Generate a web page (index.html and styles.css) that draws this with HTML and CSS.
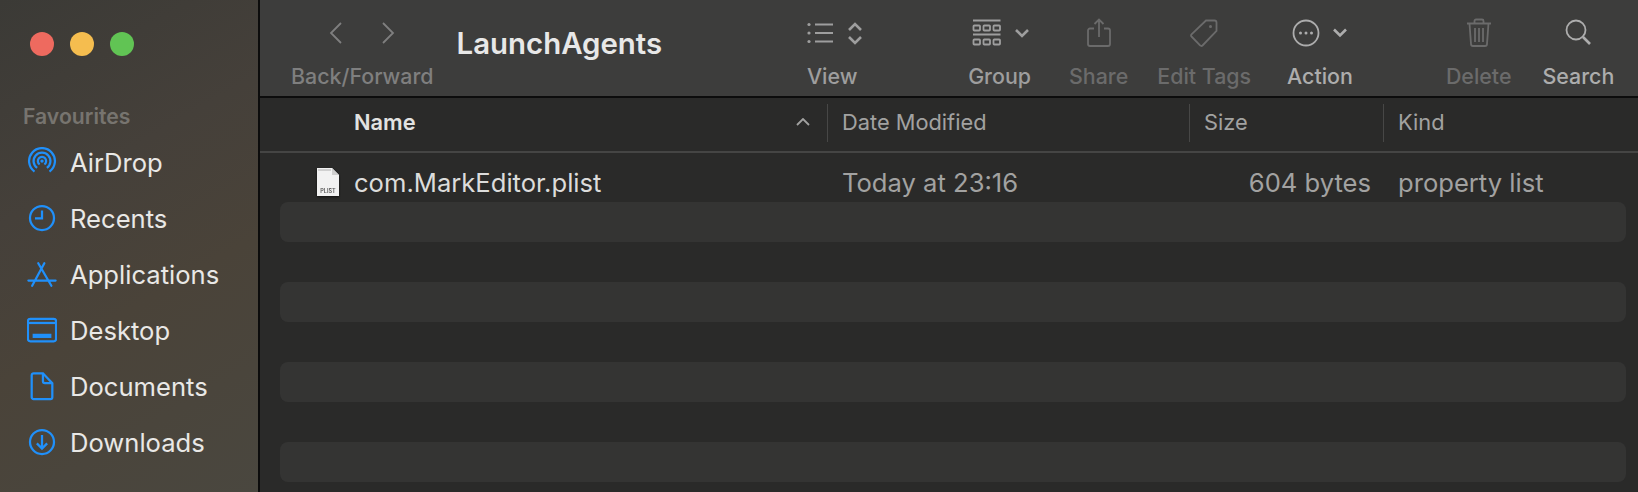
FILE: index.html
```html
<!DOCTYPE html>
<html lang="en">
<head>
  <meta charset="UTF-8" />
  <title>LaunchAgents</title>
  <link rel="stylesheet" href="styles.css">
</head>
<body>
  <div class="window">

    <!-- Sidebar -->
    <aside class="sidebar">
      <div class="lights">
        <span class="light red"></span>
        <span class="light yellow"></span>
        <span class="light green"></span>
      </div>
      <div class="side-title">Favourites</div>
      <ul class="side-list">
        <li class="side-item">
          <svg class="side-icon" viewBox="0 0 32 32"><path d="M8 26.200A13.800 13.800 0 1 1 24 26.200"/><path d="M10.800 22.300A9 9 0 1 1 21.200 22.300"/><path d="M13.500 18.600A4.400 4.400 0 1 1 18.500 18.600"/><circle class="solid" cx="16" cy="15" r="1.800"/></svg>
          AirDrop
        </li>
        <li class="side-item">
          <svg class="side-icon" viewBox="0 0 32 32"><circle cx="16" cy="16" r="12.800"/><path d="M16 8V16.500H8.500"/></svg>
          Recents
        </li>
        <li class="side-item">
          <svg class="side-icon" viewBox="0 0 32 32"><path d="M1.500 23H30.500M12 4.500L26 28.500M18.500 4.500L5.500 28.500" stroke-linecap="round"/></svg>
          Applications
        </li>
        <li class="side-item">
          <svg class="side-icon" viewBox="0 0 32 32"><rect x="1" y="4" width="30" height="24" rx="2.500"/><path d="M1 8.500H31"/><rect class="solid" x="6" y="20" width="20" height="4.500"/></svg>
          Desktop
        </li>
        <li class="side-item">
          <svg class="side-icon" viewBox="0 0 32 32"><path d="M7 2.500H17L27 13V28a2 2 0 0 1-2 2H7a2 2 0 0 1-2-2V4.500a2 2 0 0 1 2-2Z"/><path d="M17 2.500V11a2 2 0 0 0 2 2H27"/></svg>
          Documents
        </li>
        <li class="side-item">
          <svg class="side-icon" viewBox="0 0 32 32"><circle cx="16" cy="16" r="12.800"/><path d="M16 8.500V22.500M10.500 17.500L16 23L21.500 17.500"/></svg>
          Downloads
        </li>
      </ul>
    </aside>

    <div class="main">

      <!-- Toolbar -->
      <header class="toolbar">
        <div class="tool tool-back dim">
          <div class="tool-icon nav-icons">
            <svg width="16" height="24" viewBox="0 0 16 24"><path d="M13 2L3 12L13 22"/></svg>
            <svg width="16" height="24" viewBox="0 0 16 24"><path d="M3 2L13 12L3 22"/></svg>
          </div>
          <span class="tool-label">Back/Forward</span>
        </div>

        <h1 class="title">LaunchAgents</h1>

        <div class="tool tool-view">
          <div class="tool-icon">
            <svg width="56" height="28" viewBox="0 0 56 28"><path d="M9 5.500H27M9 14H27M9 22.500H27"/><circle class="solid" cx="3" cy="5.500" r="1.600"/><circle class="solid" cx="3" cy="14" r="1.600"/><circle class="solid" cx="3" cy="22.500" r="1.600"/><path class="thick" d="M43 11L49 5L55 11M43 18L49 24L55 18"/></svg>
          </div>
          <span class="tool-label">View</span>
        </div>

        <div class="tool tool-group">
          <div class="tool-icon">
            <svg width="58" height="28" viewBox="0 0 58 28"><path d="M1 1.500H28.500M1 15.500H28.500"/><rect x="1.500" y="6.500" width="6.500" height="5" rx=".8"/><rect x="11.500" y="6.500" width="6.500" height="5" rx=".8"/><rect x="21.500" y="6.500" width="6.500" height="5" rx=".8"/><rect x="1.500" y="20.500" width="6.500" height="5" rx=".8"/><rect x="11.500" y="20.500" width="6.500" height="5" rx=".8"/><rect x="21.500" y="20.500" width="6.500" height="5" rx=".8"/><path class="thick" d="M44 11L50 17L56 11"/></svg>
          </div>
          <span class="tool-label">Group</span>
        </div>

        <div class="tool tool-share dim">
          <div class="tool-icon">
            <svg width="24" height="30" viewBox="0 0 24 30"><path d="M7 10.500H3a2 2 0 0 0-2 2V26a2 2 0 0 0 2 2H21a2 2 0 0 0 2-2V12.500a2 2 0 0 0-2-2H17M12 19V1.500M7.500 6L12 1.500L16.500 6"/></svg>
          </div>
          <span class="tool-label">Share</span>
        </div>

        <div class="tool tool-tags dim">
          <div class="tool-icon">
            <svg width="30" height="30" viewBox="0 0 30 30"><path d="M17 2.500H25.500a2 2 0 0 1 2 2V13L13.500 27.500a1.500 1.500 0 0 1-2.200 0L2.500 18.500a1.500 1.500 0 0 1 0-2.200Z"/><circle class="solid" cx="21.500" cy="8.500" r="1.500"/></svg>
          </div>
          <span class="tool-label">Edit Tags</span>
        </div>

        <div class="tool tool-action">
          <div class="tool-icon">
            <svg width="56" height="28" viewBox="0 0 56 28"><circle cx="14" cy="14" r="12.500"/><circle class="solid" cx="8.500" cy="14" r="1.500"/><circle class="solid" cx="14" cy="14" r="1.500"/><circle class="solid" cx="19.500" cy="14" r="1.500"/><path class="thick" d="M42 10.500L48 16.500L54 10.500"/></svg>
          </div>
          <span class="tool-label">Action</span>
        </div>

        <div class="tool tool-delete dim">
          <div class="tool-icon">
            <svg width="26" height="30" viewBox="0 0 26 30"><path d="M1 5.500H25M8.500 5V3a1.500 1.500 0 0 1 1.500-1.500H16A1.500 1.500 0 0 1 17.500 3V5M3.500 5.500L5 26a2 2 0 0 0 2 2H19a2 2 0 0 0 2-2L22.500 5.500M9 10V24M13 10V24M17 10V24"/></svg>
          </div>
          <span class="tool-label">Delete</span>
        </div>

        <div class="tool tool-search">
          <div class="tool-icon">
            <svg width="26" height="28" viewBox="0 0 26 28"><circle cx="11" cy="11" r="9.500"/><path class="thick" d="M18 18L25 25"/></svg>
          </div>
          <span class="tool-label">Search</span>
        </div>
      </header>

      <!-- Column header -->
      <div class="columns">
        <div class="col col-name">
          <span>Name</span>
          <svg width="14" height="8" viewBox="0 0 14 8"><path d="M1 7L7 1L13 7"/></svg>
        </div>
        <div class="col">Date Modified</div>
        <div class="col">Size</div>
        <div class="col">Kind</div>
      </div>

      <!-- File rows -->
      <div class="list">
        <div class="row">
          <div class="cell cell-name">
            <svg class="file-icon" width="24" height="30" viewBox="0 0 24 30">
              <path d="M1 1H16L23 8V29H1Z" fill="#f2f2f2"/>
              <path d="M16 1L23 8H16Z" fill="#cfcfcf"/>
              <path d="M2 3H15" stroke="#c4c4c4" stroke-width="1.500"/>
              <text x="12" y="26" text-anchor="middle" class="file-tag">PLIST</text>
            </svg>
            com.MarkEditor.plist
          </div>
          <div class="cell">Today at 23:16</div>
          <div class="cell cell-size">604 bytes</div>
          <div class="cell">property list</div>
        </div>
        <div class="row"></div>
        <div class="row"></div>
        <div class="row"></div>
        <div class="row"></div>
        <div class="row"></div>
        <div class="row"></div>
        <div class="row"></div>
      </div>
    </div>
  </div>
</body>
</html>
```

FILE: styles.css
```css
:root {
  --blue: #2090fa;
  --tool: #9e9e9e;
  --tool-dim: #6b6b6b;
  --list-bg: #2a2a29;
  --stripe: #343433;
  --muted: #a2a2a1;
}

* {
  box-sizing: border-box;
}

body {
  margin: 0;
  width: 1638px;
  height: 492px;
  overflow: hidden;
  font-family: Inter, 'Noto Sans', sans-serif;
  background-color: var(--list-bg);
}

svg {
  display: block;
  fill: none;
  stroke: currentColor;
  stroke-width: 1.8;
}

svg .solid {
  fill: currentColor;
  stroke: none;
}

svg .thick {
  stroke-width: 2.6;
}

.window {
  display: flex;
  height: 492px;
}

/* Sidebar */
.sidebar {
  width: 260px;
  flex-shrink: 0;
  border-right: 2px solid #0c0c0c;
  background: linear-gradient(150deg, #3b3a36 0%, #45403a 35%, #4a4339 60%, #4a473f 100%);
  padding: 32px 0 0 30px;
}

.lights {
  display: flex;
  gap: 16px;
}

.light {
  width: 24px;
  height: 24px;
  border-radius: 50%;
}

.red { background-color: #ee6a5f; }
.yellow { background-color: #f5bd4f; }
.green { background-color: #61c454; }

.side-title {
  margin: 48px 0 0 -7px;
  font-size: 21.200px;
  line-height: 24px;
  font-weight: 600;
  color: #77746f;
}

.side-list {
  list-style: none;
  margin: 6px 0 0 -3px;
  padding: 0;
}

.side-item {
  display: flex;
  align-items: center;
  gap: 13px;
  height: 56px;
  font-size: 25.600px;
  color: #e9e8e6;
}

.side-icon {
  width: 30px;
  height: 30px;
  color: var(--blue);
  stroke-width: 2.400;
}

/* Toolbar */
.main {
  flex: 1;
  min-width: 0;
  display: flex;
  flex-direction: column;
}

.toolbar {
  display: flex;
  height: 98px;
  flex-shrink: 0;
  background-color: #3d3d3c;
  border-bottom: 2px solid #0c0c0c;
  color: var(--tool);
}

.tool {
  display: flex;
  flex-direction: column;
  align-items: center;
  padding-top: 18px;
}

.dim {
  color: var(--tool-dim);
}

.tool-icon {
  height: 30px;
  display: flex;
  align-items: center;
  justify-content: center;
}

.tool-label {
  margin-top: 16px;
  font-size: 21.400px;
  line-height: 24px;
  font-weight: 500;
  white-space: nowrap;
}

.nav-icons {
  gap: 36px;
}

.title {
  margin: 26px 0 0 23px;
  font-size: 29.400px;
  line-height: 36px;
  font-weight: 600;
  color: #e8e8e8;
  white-space: nowrap;
}

.tool-back { margin-left: 31px; color: #7f7f7f; }
.tool-view { margin-left: 144px; }
.tool-group { margin-left: 106px; }
.tool-share { margin-left: 35px; }
.tool-tags { margin-left: 29px; }
.tool-action { margin-left: 36px; color: #adadad; }
.tool-delete { margin-left: 93px; }
.tool-search { margin-left: 31px; color: #adadad; }

.tool-view .tool-label { margin-right: 4px; }
.tool-group .tool-label { margin-right: 3px; }

/* Column header */
.columns,
.row {
  display: grid;
  grid-template-columns: 567px 362px 194px 1fr;
}

.columns {
  height: 55px;
  flex-shrink: 0;
  align-items: center;
  border-bottom: 2px solid #454544;
  padding-bottom: 3px;
  font-size: 21.800px;
  color: var(--muted);
}

.col {
  height: 38px;
  display: flex;
  align-items: center;
  padding: 0 0 2px 14px;
  border-left: 1px solid #474746;
}

.col-name {
  justify-content: space-between;
  padding: 0 17px 2px 94px;
  border-left: none;
  font-weight: 600;
  color: #e2e2e1;
}

.col-name svg {
  color: var(--muted);
}

/* File rows */
.list {
  flex: 1;
  overflow: hidden;
  padding-top: 9px;
}

.row {
  height: 40px;
  margin: 0 12px 0 20px;
  border-radius: 8px;
  align-items: center;
  font-size: 25.600px;
  color: var(--muted);
  grid-template-columns: 547px 362px 194px 1fr;
}

.row:nth-child(even) {
  background-color: var(--stripe);
}

.cell {
  padding-left: 15px;
  white-space: nowrap;
}

.cell-name {
  display: flex;
  align-items: center;
  gap: 14px;
  padding-left: 36px;
  color: #dcdcdb;
}

.cell-size {
  padding-right: 12px;
  text-align: right;
}

.file-icon {
  stroke: none;
  filter: drop-shadow(0 1px 1px rgba(0, 0, 0, 0.6));
}

.file-tag {
  font-size: 5.500px;
  font-weight: 600;
  fill: #555;
  stroke: none;
}
```
